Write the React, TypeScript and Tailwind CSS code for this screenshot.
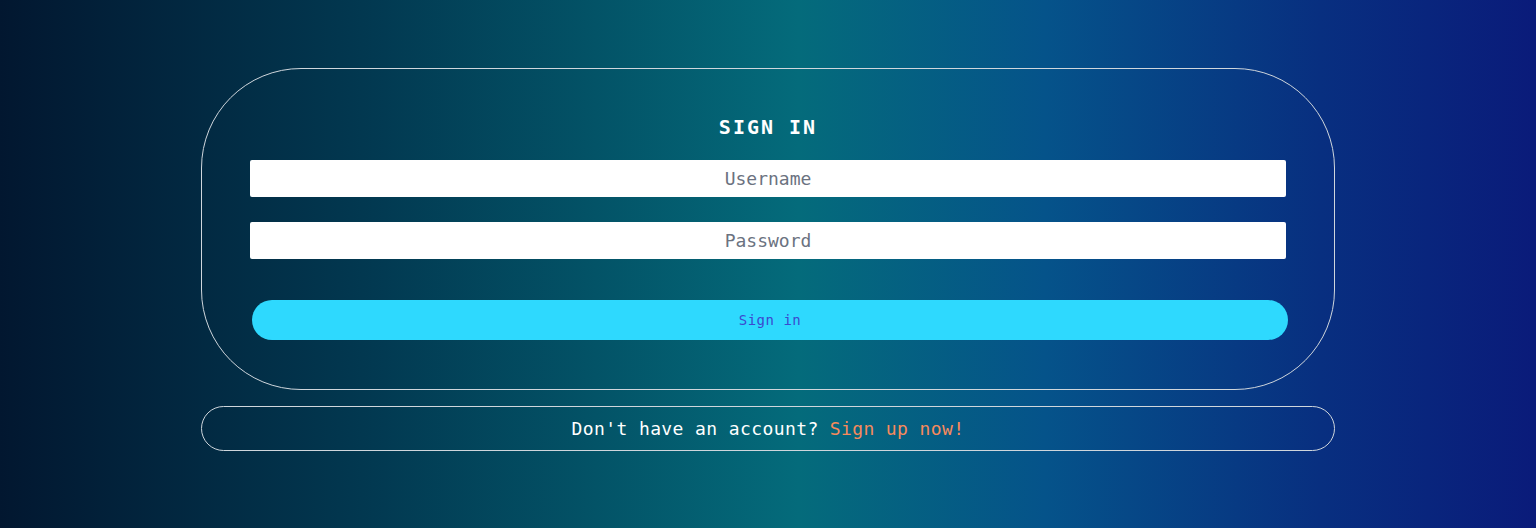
const mono = { fontFamily: '"DejaVu Sans Mono", "Liberation Mono", monospace' };

const LoginCard = () => {
  return (
    <div className="flex h-[322px] w-[1134px] flex-col rounded-[100px] border border-[#cfd6dc] px-[48px] pt-[44px]">
      <h1 className="text-center text-[20px] font-bold leading-[28px] tracking-[2px] text-white">
        SIGN IN
      </h1>
      <form className="mt-[19px] flex flex-col" onSubmit={(e) => e.preventDefault()}>
        <input
          type="text"
          placeholder="Username"
          className="h-[37px] w-full rounded-[2px] bg-white text-center text-[18px] text-gray-800 placeholder:text-[#6b7280] outline-none"
          style={mono}
        />
        <input
          type="password"
          placeholder="Password"
          className="mt-[25px] h-[37px] w-full rounded-[2px] bg-white text-center text-[18px] text-gray-800 placeholder:text-[#6b7280] outline-none"
          style={mono}
        />
        <button
          type="submit"
          className="mt-[41px] ml-[2px] h-[40px] w-full rounded-full bg-[#2ed9fe] text-[14px] tracking-[0.5px] text-[#3b49cf]"
          style={mono}
        >
          Sign in
        </button>
      </form>
    </div>
  );
};

export default function App() {
  return (
    <div
      className="flex h-[528px] w-full flex-col items-center bg-[linear-gradient(90deg,#021730_0%,#023a52_25%,#046b7b_52%,#05538a_68%,#082f80_86%,#0a1b7a_100%)] pt-[68px]"
      style={mono}
    >
      <LoginCard />
      <div className="mt-[16px] flex h-[45px] w-[1134px] items-center justify-center rounded-full border border-[#cfd6dc] text-[18px] tracking-[0.4px]">
        <span className="text-white">Don't have an account?</span>
        <a href="#" className="ml-[11px] text-[#f78a5c]">
          Sign up now!
        </a>
      </div>
    </div>
  );
}
